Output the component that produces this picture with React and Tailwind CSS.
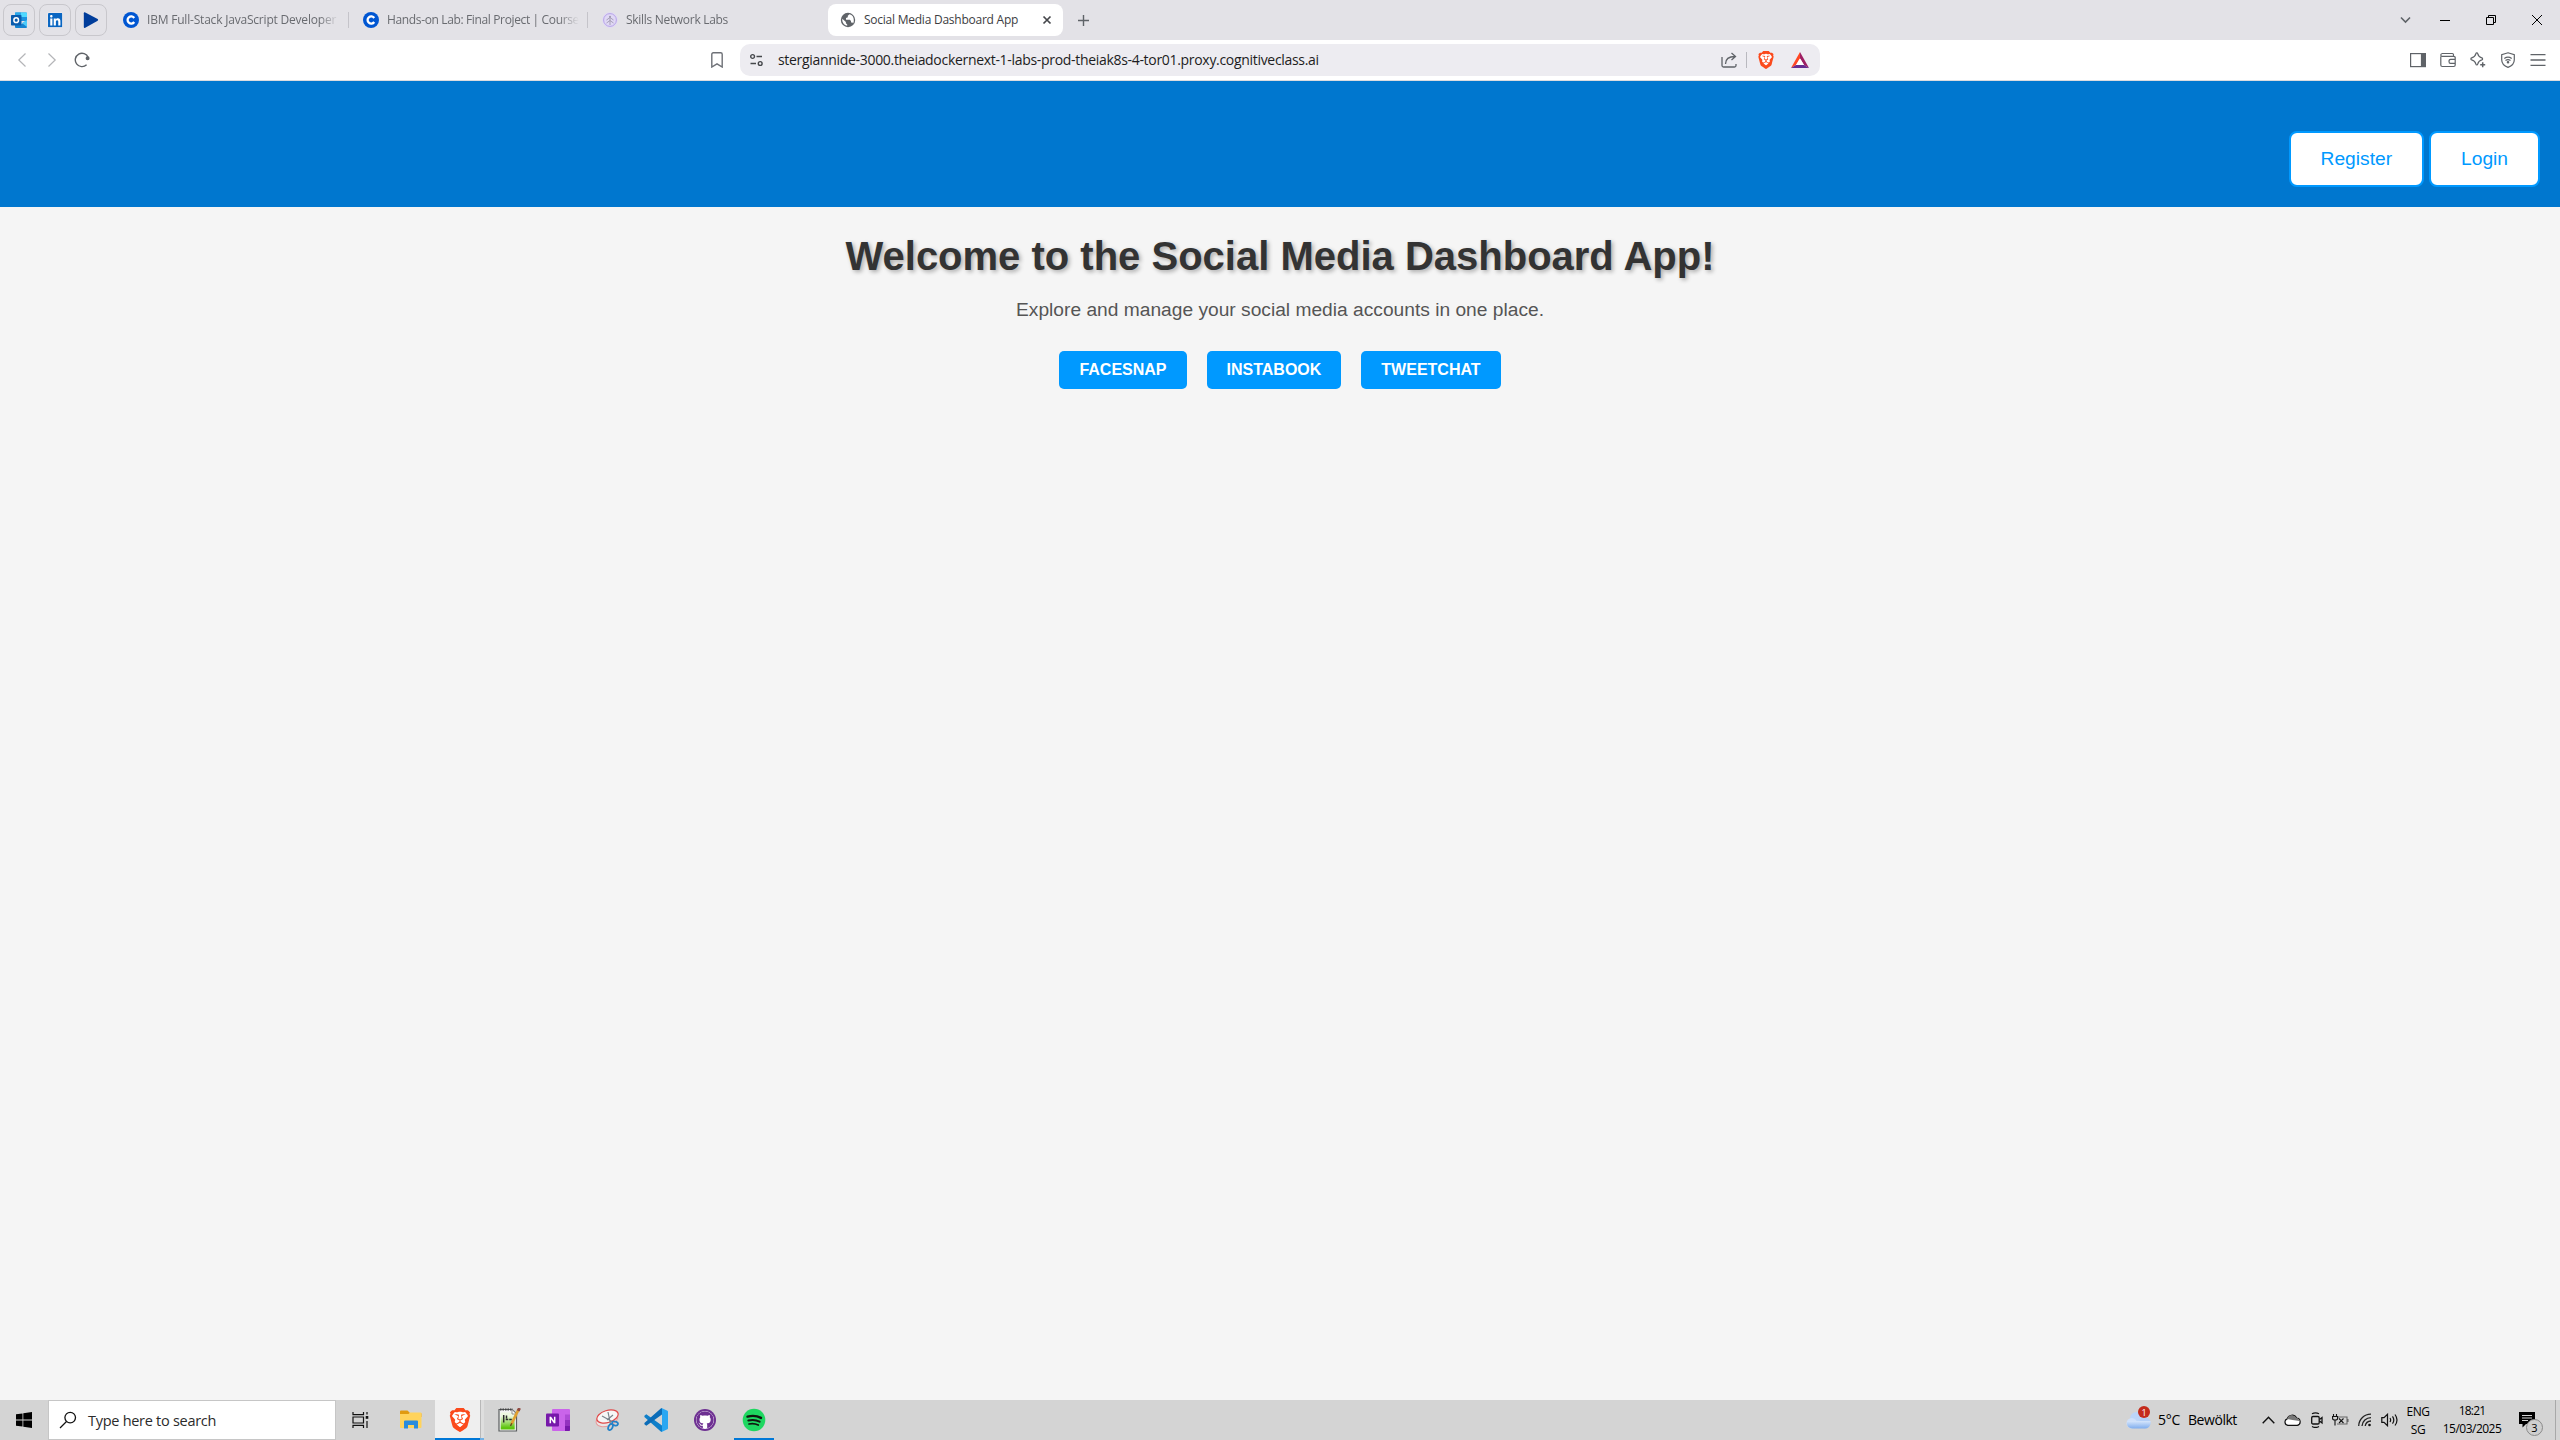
import React from "react";
import { SiBrave } from "react-icons/si";
import { FaGithub, FaLinkedin } from "react-icons/fa";

/* ---------- browser icons ---------- */

const OutlookIcon = () => (
  <svg width="16" height="16" viewBox="0 0 16 16">
    <path d="M4 1.5Q4 .5 5 .5h10q1 0 1 1V9H4z" fill="#1490df" />
    <path d="M10 .5h5q1 0 1 1V5h-6z" fill="#50d9ff" />
    <path d="M4 .5h6V5H4z" fill="#28a8ea" />
    <path d="M4 5h6v5H4z" fill="#0f6fc0" />
    <path d="M10 5h6v4h-6z" fill="#1c93e0" />
    <path d="M4 9l6 3.500L16 8v7q0 1-1 1H5q-1 0-1-1z" fill="#1583d0" />
    <path d="M16 8v7l-5-4z" fill="#4ccbfa" />
    <rect x="0" y="3" width="10.500" height="10.500" rx=".8" fill="#0a5cad" />
    <ellipse cx="5.200" cy="8.200" rx="2.300" ry="2.400" fill="none" stroke="#fff" strokeWidth="1.500" />
  </svg>
);

const PlayIcon = () => (
  <svg width="16" height="16" viewBox="0 0 16 16">
    <path d="M1.800.200 14.700 7.100q.9.800 0 1.700L1.800 15.900Q.8 16 .8 15V1.200Q.8 0 1.800.200z" fill="#003d9b" />
  </svg>
);

const CourseraIcon = () => (
  <svg width="16" height="16" viewBox="0 0 16 16" className="shrink-0">
    <circle cx="8" cy="8" r="8" fill="#0056d2" />
    <path d="M11.200 6A3.600 3.600 0 1 0 11.200 10" fill="none" stroke="#fff" strokeWidth="2.300" />
  </svg>
);

const SkillsIcon = () => (
  <svg width="16" height="16" viewBox="0 0 16 16" className="shrink-0" fill="none">
    <circle cx="8" cy="8" r="7.700" fill="#e0d8f5" />
    <circle cx="8" cy="8" r="6.400" stroke="#b7a4e8" strokeWidth="1" />
    <path d="M8 4v9M4.500 8 8 5.500 11.500 8M4.500 11 8 8.500l3.500 2.500" stroke="#a09bb0" strokeWidth=".9" />
    <circle cx="8" cy="4.800" r="1" fill="#a09bb0" />
  </svg>
);

const GlobeIcon = () => (
  <svg width="16" height="16" viewBox="0 0 16 16" className="shrink-0">
    <circle cx="8" cy="8" r="7.200" fill="#5f6368" />
    <path
      d="M9.500 2.300 7.800 3.800v1.500L6 6.100v1.700h3.800l1.200 1.300v1.400h1.500l.6.900A6 6 0 0 0 13.800 8 6 6 0 0 0 9.500 2.300zM2.300 6.700A6 6 0 0 0 7.200 13.800V12.400L5.900 11.200V10z"
      fill="#fff"
    />
  </svg>
);

const Line = ({ w = 16, h = 16, s = 1.2, c = "#5f6368", children }) => (
  <svg width={w} height={h} viewBox={`0 0 ${w} ${h}`} fill="none" stroke={c} strokeWidth={s} className="shrink-0">
    {children}
  </svg>
);

const BatIcon = () => (
  <svg width="18" height="16" viewBox="0 0 18 16">
    <path d="M9 0 0 16l5-3 4-6.500z" fill="#ff4724" />
    <path d="M9 0l9 16-5-3-4-6.500z" fill="#9e1f63" />
    <path d="M0 16h18l-5-3H5z" fill="#662d91" />
    <path d="M9 6.300 5 13h8z" fill="#fff" />
  </svg>
);

const Brave = ({ inner }) => (
  <span className={`${inner ? "text-[24px]" : "text-[18px]"} relative flex text-[#fb4a1c]`}>
    <svg className="absolute inset-0" width="100%" height="100%" viewBox="0 0 24 24">
      <path d="M5 4.500 12 3l7 1.500 1 4L17.500 17 12 21l-5.500-4L4 8.500z" fill="#fff" />
    </svg>
    <SiBrave className="relative" />
  </span>
);

/* ---------- tab strip ---------- */

function Pinned({ children }) {
  return (
    <div className="flex h-8 w-8 items-center justify-center rounded-lg border border-[#c8c7cc]">{children}</div>
  );
}

function Tab({ icon, label, tracking, sep, width }) {
  return (
    <div className={`flex h-8 shrink-0 items-center ${width}`}>
      <span className="w-[14px] shrink-0" />
      {icon}
      <span
        className={`ml-2 w-[194px] whitespace-nowrap text-xs text-[#696b70] [mask-image:linear-gradient(to_right,black_172px,transparent_192px)] ${tracking}`}
      >
        {label}
      </span>
      {sep && <span className="ml-auto h-4 w-px shrink-0 bg-[#c5c4ca]" />}
    </div>
  );
}

function TabStrip() {
  return (
    <div className="flex h-10 items-center bg-[#e3e2e7] pl-[3px]">
      <div className="flex gap-1">
        <Pinned><OutlookIcon /></Pinned>
        <Pinned><FaLinkedin className="text-[16.500px] text-[#0a66c2] bg-white [clip-path:inset(1px_1px_1px_1px)]" /></Pinned>
        <Pinned><PlayIcon /></Pinned>
      </div>
      <div className="ml-[2px] flex">
        <Tab icon={<CourseraIcon />} label="IBM Full-Stack JavaScript Developer" tracking="tracking-[-0.200px]" sep width="w-[240px]" />
        <Tab icon={<CourseraIcon />} label="Hands-on Lab: Final Project | Course" tracking="tracking-[-0.360px]" sep width="w-[239px]" />
        <Tab icon={<SkillsIcon />} label="Skills Network Labs" tracking="tracking-[-0.300px]" width="w-[240px]" />
      </div>
      <div className="flex h-8 w-[235px] shrink-0 items-center rounded-lg bg-white pl-3 pr-[11px]">
        <GlobeIcon />
        <span className="ml-2 whitespace-nowrap text-xs tracking-[-0.240px] text-[#3c3d42]">Social Media Dashboard App</span>
        <span className="ml-auto flex">
          <Line w={10} h={10} s={1.700} c="#45474b"><path d="M1.500 1.500l7 7M8.500 1.500l-7 7" /></Line>
        </span>
      </div>
      <span className="ml-[15px] flex">
        <Line w={11} h={11} s={1.400}><path d="M5.500 0v11M0 5.500h11" /></Line>
      </span>
      <div className="ml-auto flex items-center pr-[18px]">
        <Line w={11} h={8} s={1.600}><path d="M1 1.500l4.500 4.500L10 1.500" /></Line>
        <span className="ml-[29px] h-px w-[10px] bg-black" />
        <span className="ml-9 flex">
          <Line w={10} h={10} s={1} c="#000"><path d="M.5 2.500h7v7h-7zM2.500 2.500v-2h7v7h-2" /></Line>
        </span>
        <span className="ml-9 flex">
          <Line w={10} h={10} s={1} c="#000"><path d="M0 0l10 10M10 0L0 10" /></Line>
        </span>
      </div>
    </div>
  );
}

/* ---------- address bar ---------- */

function Toolbar() {
  return (
    <div className="flex h-[41px] items-center border-b border-[#dcdce0] bg-white">
      <span className="ml-[17px] flex">
        <Line w={10} h={14} c="#b4b5b8"><path d="M8.500.500 1.800 7l6.700 6.500" /></Line>
      </span>
      <span className="ml-5 flex">
        <Line w={10} h={14} c="#b4b5b8"><path d="M1.500.500 8.200 7l-6.700 6.500" /></Line>
      </span>
      <span className="ml-[17px] flex">
        <Line w={16} h={16} s={1.400}>
          <path d="M12.600 12.800A6.700 6.700 0 1 1 14.200 5.400" />
          <circle cx="13.600" cy="6.200" r="1.300" fill="#5f6368" />
        </Line>
      </span>
      <span className="ml-[621px] flex">
        <Line w={12} h={16} s={1.400} c="#6e7177"><path d="M.8 2.300Q.8.800 2.300.800h7.400q1.500 0 1.500 1.500V15L6 11.800.8 15z" /></Line>
      </span>
      <div className="ml-[17px] flex h-8 w-[1080px] items-center rounded-[10px] bg-[#edecf1] pl-[10px] pr-[11px]">
        <Line w={13} h={14} s={1.400} c="#45474b">
          <circle cx="2.600" cy="3.500" r="1.900" />
          <path d="M6.500 3.500H12M.5 10.500H6" />
          <circle cx="10.200" cy="10.500" r="1.900" />
        </Line>
        <span className="ml-[15px] whitespace-nowrap text-sm tracking-[-0.310px] text-[#1d1d22]">
          stergiannide-3000.theiadockernext-1-labs-prod-theiak8s-4-tor01.proxy.cognitiveclass.ai
        </span>
        <div className="ml-auto flex items-center">
          <Line w={17} h={16} s={1.300}>
            <path d="M1 5v8.500Q1 15 2.500 15h11q1.500 0 1.500-1.500V12M4.500 12Q4.500 4.500 14 4.500M10.500 1l4 3.500-4 3.500" />
          </Line>
          <span className="ml-2 h-4 w-px bg-[#b9b9bf]" />
          <span className="ml-[10px]"><Brave /></span>
          <span className="ml-4"><BatIcon /></span>
        </div>
      </div>
      <div className="ml-auto flex items-center gap-[14px] pr-[14px]">
        <Line w={16} h={16}>
          <rect x=".6" y="1.600" width="14.800" height="13" />
          <path d="M11.500 1.500h4v13h-4z" fill="#5f6368" />
        </Line>
        <Line w={16} h={16}>
          <path d="M.8 4.500V13q0 1.500 1.500 1.500h11.400q1.500 0 1.500-1.500V5.500q0-1.200-1.500-1.200H2.300Q.8 4.300.8 3T2.300 1.500h10q1.200 0 1.200 1.200v1.600M15 7.300H10.500q-1.500 0-1.500 2.100 0 2 1.500 2H15" />
        </Line>
        <Line w={16} h={16}>
          <path d="M6.800.8Q7.500.8 7.700 1.600 8.500 5 11.800 5.900q.8.300.8 1t-.8 1Q8.500 8.800 7.700 12.200q-.2.800-.9.800t-.9-.8Q5.100 8.800 1.700 7.900.9 7.600.9 6.900t.8-1Q5.100 5 5.900 1.600 6.100.8 6.800.8z" />
          <path d="M12.700 10.200v5M10.200 12.700h5" strokeWidth="1.500" />
        </Line>
        <Line w={16} h={16}>
          <path d="M8 .8l6.300 2v5Q14.300 13 8 15.400 1.700 13 1.700 7.800v-5z" />
          <path d="M4.300 6.500Q8 3.800 11.700 6.500M5.500 8.600Q8 6.800 10.500 8.600" />
          <circle cx="8" cy="10.300" r=".7" fill="#5f6368" />
        </Line>
        <Line w={16} h={16} s={1.300}><path d="M.5 2.700h15M.5 8h15M.5 13.300h15" /></Line>
      </div>
    </div>
  );
}

/* ---------- page ---------- */

function AuthLink({ children }) {
  return (
    <a className="flex h-14 items-center rounded-lg border-2 border-[#0099ff] bg-white px-[30px] text-[19.200px] leading-[22px] text-[#0099ff]">
      {children}
    </a>
  );
}

function NetworkButton({ children }) {
  return (
    <button className="h-[38px] rounded-[5px] bg-[#0099ff] px-5 text-base font-bold leading-[18px] text-white">{children}</button>
  );
}

function Page() {
  return (
    <div className="flex h-[1319px] flex-col bg-[#f5f5f5] font-['Liberation_Sans',Arial,sans-serif]">
      <header className="flex h-[126px] shrink-0 items-start justify-end gap-[5px] bg-[#0077cf] pr-5 pt-[50px]">
        <AuthLink>Register</AuthLink>
        <AuthLink>Login</AuthLink>
      </header>
      <main className="flex flex-col items-center">
        <h1 className="mt-[26px] text-[40px] font-bold leading-[46px] text-[#333333] [text-shadow:2px_2px_4px_rgba(0,0,0,0.300)]">
          Welcome to the Social Media Dashboard App!
        </h1>
        <p className="mt-5 text-[19.200px] leading-[22px] text-[#555555]">Explore and manage your social media accounts in one place.</p>
        <div className="mt-[30px] flex gap-5">
          <NetworkButton>FACESNAP</NetworkButton>
          <NetworkButton>INSTABOOK</NetworkButton>
          <NetworkButton>TWEETCHAT</NetworkButton>
        </div>
      </main>
    </div>
  );
}

/* ---------- taskbar ---------- */

const FolderIcon = () => (
  <svg width="24" height="20" viewBox="0 0 24 20">
    <path d="M1 1.500Q1 .5 2 .5h6.500L11 3h10.500q1 0 1 1v3H1z" fill="#e09a10" />
    <path d="M1 4h8.500l1.500-1.500h10.500q1 0 1 1V17q0 1-1 1H2q-1 0-1-1z" fill="#ffd35c" />
    <path d="M5 18.500v-7q0-1 1-1h12q1 0 1 1v7h-4v-3.500H9v3.500z" fill="#2a8bdc" />
  </svg>
);

const NotepadIcon = () => (
  <svg width="24" height="24" viewBox="0 0 24 24">
    <defs>
      <linearGradient id="pad" x1="0" y1="0" x2="0" y2="1">
        <stop offset=".2" stopColor="#eef8e0" />
        <stop offset=".9" stopColor="#5cc40c" />
      </linearGradient>
    </defs>
    <path d="M2 1.500h13l4.500 4V23H2z" fill="#f3f3f3" stroke="#5b5f60" strokeWidth="1.200" />
    <path d="M3.700 4.500h14v17h-14z" fill="url(#pad)" />
    <path d="M3 1.500h13" stroke="#444" strokeWidth="1.800" strokeDasharray="1.500 1" />
    <path d="M15 1.500v4.500h4.500z" fill="#fff" stroke="#777" strokeWidth=".8" />
    <path d="M6.700 7v7.500M9.500 7.500v3M8.700 11.500h2.600M12.200 11.500h2.600" stroke="#2b2b2b" strokeWidth="1.500" />
    <path d="M21.500 1.500 14.500 16" stroke="#e0a030" strokeWidth="2.800" />
    <path d="M22.500 0 21.200 2.800" stroke="#8f4a42" strokeWidth="3" />
    <path d="M14.800 15.300 13.500 18" stroke="#6b4a1c" strokeWidth="1.400" />
  </svg>
);

const OneNoteIcon = () => (
  <svg width="24" height="22" viewBox="0 0 24 22">
    <rect x="6" y="0" width="18" height="22" rx="1" fill="#ca64ea" />
    <path d="M19 5.500h5V11h-5z" fill="#ae4bd5" />
    <path d="M19 11h5v5.500h-5z" fill="#9332bf" />
    <path d="M19 16.500h5V21q0 1-1 1h-4z" fill="#7719aa" />
    <rect x="0" y="4.500" width="13" height="13" rx="1" fill="#7719aa" />
    <path d="M4.300 14.300V7.700M8.700 14.300V7.700M4.300 8l4.400 6" fill="none" stroke="#fff" strokeWidth="1.500" />
  </svg>
);

const SnipIcon = () => (
  <svg width="24" height="24" viewBox="0 0 24 24" fill="none">
    <ellipse cx="12" cy="11.500" rx="11.300" ry="6.500" transform="rotate(-20 12 11.500)" fill="#e9e6e6" stroke="#e89a9a" strokeWidth="1" />
    <ellipse cx="12.500" cy="8.500" rx="11" ry="6" transform="rotate(-17 12.500 8.500)" fill="#f6f6f6" stroke="#e04a4a" strokeWidth="1.200" />
    <path d="M13 4l2.500 12M7 8l11 6M12 12l6-5" stroke="#7a838c" strokeWidth="1.200" />
    <ellipse cx="15.500" cy="19" rx="2" ry="3.300" transform="rotate(25 15.500 19)" stroke="#2382c8" strokeWidth="1.800" />
    <ellipse cx="20" cy="15.500" rx="3" ry="1.900" transform="rotate(15 20 15.500)" stroke="#2382c8" strokeWidth="1.800" />
  </svg>
);

const CodeIcon = () => (
  <svg width="24" height="24" viewBox="0 0 24 24">
    <path d="M.4 7.800 2.300 6.200 18 17.500V24q-.8 0-1.500-.8L.4 9z" fill="#0f7fc9" />
    <path d="M.4 16.200l1.900 1.600L18 6.500V0q-.8 0-1.500.8L.4 15z" fill="#0a6cb8" />
    <path d="M17.500 0Q18 .6 18 1.500v21q0 .9-.5 1.500l6-2.800q.5-.3.500-.9V3.700q0-.6-.5-.9z" fill="#2aa7f2" />
  </svg>
);

const SpotifyIcon = () => (
  <svg width="24" height="24" viewBox="0 0 24 24" fill="none" stroke="#10160f" strokeLinecap="round">
    <circle cx="12" cy="12" r="11.300" fill="#1ed760" stroke="none" />
    <path d="M5.500 8.600q7.500-2 13.500 1.300" strokeWidth="2.400" />
    <path d="M6.300 12.500q6.300-1.600 11.300 1.200" strokeWidth="2" />
    <path d="M7 16q5-1.200 9.300 1.100" strokeWidth="1.700" />
  </svg>
);

const CloudWeather = () => (
  <span className="relative flex">
    <svg width="25" height="20" viewBox="0 0 25 20">
      <defs>
        <linearGradient id="sky" x1="0" y1="0" x2="0" y2="1">
          <stop offset="0" stopColor="#d6e6fc" />
          <stop offset="1" stopColor="#7fadee" />
        </linearGradient>
      </defs>
      <circle cx="10.500" cy="8.500" r="6.500" fill="#bcd5f8" />
      <circle cx="5.800" cy="13.200" r="5.300" fill="#cfe0fa" />
      <circle cx="18.800" cy="12.700" r="5.700" fill="#b3cff7" />
      <path d="M1 11h23.500v2a5.500 5.500 0 0 1-5.500 5.500H6A5 5 0 0 1 1 13.500z" fill="url(#sky)" />
    </svg>
    <span className="absolute left-3 -top-[4px] flex h-3 w-3 items-center justify-center rounded-full bg-[#c42b1c] text-[9px] leading-none text-white">
      1
    </span>
  </span>
);

function Slot({ children, state }) {
  return (
    <div className={`relative flex h-10 w-[49px] shrink-0 items-center justify-center ${state === "active" ? "bg-[#efefef]" : ""}`}>
      {children}
      {state === "active" && <span className="absolute right-0 top-0 h-full w-[4px] border-l border-[#b8b8b8] bg-[#dedede]" />}
      {state === "active" && <span className="absolute bottom-0 left-0 h-[2px] w-[45px] bg-[#0078d7]" />}
      {state === "active" && <span className="absolute bottom-0 right-0 h-[2px] w-[4px] bg-[#6fb0e6]" />}
      {state === "open" && <span className="absolute bottom-0 left-[5px] h-[2px] w-10 bg-[#0078d7]" />}
    </div>
  );
}

function Taskbar() {
  return (
    <div className="flex h-10 items-center bg-[#d4d4d4] text-black">
      <div className="flex w-12 shrink-0 justify-center">
        <svg width="16" height="16" viewBox="0 0 16 16">
          <path d="M0 2.300 6.500 1.400v6.200H0zM7.300 1.300 16 0v7.600H7.300zM0 8.400h6.500v6.200L0 13.700zM7.300 8.400H16V16l-8.700-1.300z" />
        </svg>
      </div>
      <div className="flex h-10 w-[288px] shrink-0 items-center border border-[#c6c6c6] bg-white pl-[10px]">
        <Line w={18} h={18} s={1.300} c="#111"><circle cx="11.200" cy="6.600" r="5.300" /><path d="M7.500 10.500 1 17" /></Line>
        <span className="ml-[11px] pt-px text-[14.500px] tracking-[-0.280px] text-[#2b2b2b]">Type here to search</span>
      </div>
      <div className="flex w-12 shrink-0 justify-center">
        <Line w={17} h={16} s={1.200} c="#111">
          <path d="M1 0v2.600h10.500V0M1 5h10.500v6H1zM1 16v-2.600h10.500V16M15 0v2.500M15 9v7" />
          <path d="M13.700 4h2.600v2.800h-2.600z" fill="#111" stroke="none" />
        </Line>
      </div>
      <div className="ml-[2px] flex">
        <Slot><FolderIcon /></Slot>
        <Slot state="active"><Brave inner /></Slot>
        <Slot><NotepadIcon /></Slot>
        <Slot><OneNoteIcon /></Slot>
        <Slot><SnipIcon /></Slot>
        <Slot><CodeIcon /></Slot>
        <Slot>
          <span className="flex rounded-full bg-[#6e3092] p-[2px]">
            <FaGithub className="rounded-full bg-white text-[18px] text-[#6e3092]" />
          </span>
        </Slot>
        <Slot state="open"><SpotifyIcon /></Slot>
      </div>

      <div className="ml-auto flex h-10 items-center">
        <CloudWeather />
        <span className="ml-[7px] w-[30px] text-sm tracking-[-0.300px]">5°C</span>
        <span className="w-[74px] text-sm tracking-[-0.450px]">Bewölkt</span>
        <Line w={13} h={8} s={1.400} c="#111"><path d="M.7 7.200 6.500 1.300l5.800 5.900" /></Line>
        <span className="ml-[9px] flex">
          <Line w={17} h={12} s={1.200} c="#111">
            <path d="M4 11.300a3.300 3.300 0 0 1-.8-6.400A5 5 0 0 1 12.500 4a3.700 3.700 0 0 1 .8 7.300z" fill="#fff" />
            <path d="M3.200 4.900A5 5 0 0 1 12.500 4a3.700 3.700 0 0 1 3 3L8.500 6z" fill="#777" stroke="none" />
          </Line>
        </span>
        <span className="ml-[9px] flex">
          <Line w={14} h={16} s={1.300} c="#111">
            <rect x="1.700" y="4.500" width="7.500" height="7.500" rx="1.300" />
            <path d="M9.500 7.500l2.500-2v5.500L9.500 9M2 1.800Q5.500-.2 9 1.800M2 14.500q3.500 2 7 0" />
          </Line>
        </span>
        <span className="ml-[8px] flex">
          <Line w={17} h={12} s={1.100} c="#111">
            <path d="M1.500 0v2.500M4.500 0v2.500M.6 2.500h5v2q0 1.500-2.500 1.500T.6 4.500zM3 6v5.500" />
            <path d="M6 3h9v7H5M16 5v3" stroke="#666" />
            <path d="M7 4.500l4.500 4.500M11.500 4.500 7 9" />
          </Line>
        </span>
        <span className="ml-[9px] flex">
          <Line w={14} h={14} s={1.300} c="#222">
            <path d="M.7 13A12 12 0 0 1 13 1.200M4 13A9 9 0 0 1 13 4.600M7.200 13A6 6 0 0 1 13 8" />
            <circle cx="11.500" cy="12" r="1.300" fill="#111" stroke="none" />
          </Line>
        </span>
        <span className="ml-[9px] flex">
          <Line w={17} h={14} s={1.200} c="#111">
            <path d="M.8 4.700H3L6.500 1.300v11.400L3 9.300H.8zM9 5q1.300 2 0 4M11.500 3.300q2.600 3.700 0 7.400M14 1.500q4 5.500 0 11" />
          </Line>
        </span>
        <div className="ml-[4px] w-[32px] pt-px text-center text-xs leading-[18px] tracking-[-0.500px]">
          <div>ENG</div>
          <div>SG</div>
        </div>
        <div className="ml-[6px] w-[64px] whitespace-nowrap text-center text-xs leading-[18px] tracking-[-0.520px]">
          <div className="tracking-[-0.850px]">18:21</div>
          <div>15/03/2025</div>
        </div>
        <span className="relative ml-[15px] flex">
          <svg width="16" height="16" viewBox="0 0 16 16">
            <path d="M0 0h16v12H7l-3.500 3.500V12H0z" fill="#000" />
            <path d="M3 3.500h10M3 6h10M3 8.500h6" stroke="#d4d4d4" strokeWidth="1" />
          </svg>
          <span className="absolute left-[7px] top-[7px] flex h-[17px] w-[17px] items-center justify-center rounded-full border border-[#8a8a8a] bg-[#cfcfcf] text-[11px] leading-none">
            3
          </span>
        </span>
        <span className="ml-5 h-10 w-px bg-[#a8a8a8]" />
        <span className="w-1" />
      </div>
    </div>
  );
}

export default function App() {
  return (
    <div className="flex h-[1440px] w-[2560px] flex-col overflow-hidden font-['Open_Sans','Noto_Sans',sans-serif]">
      <TabStrip />
      <Toolbar />
      <Page />
      <Taskbar />
    </div>
  );
}
